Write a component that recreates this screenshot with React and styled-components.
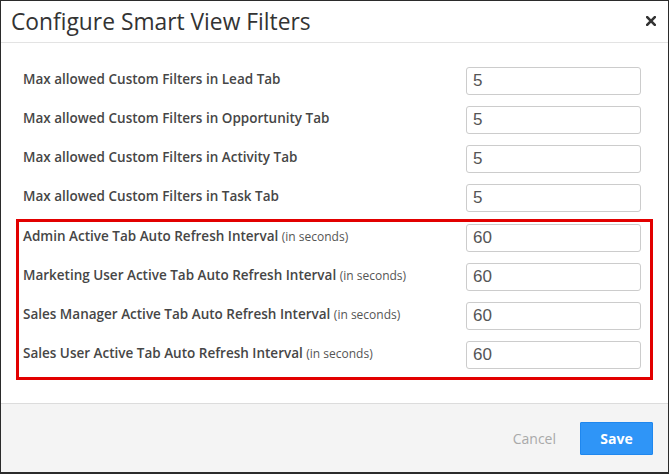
import React, { useState } from 'react';
import styled, { createGlobalStyle } from 'styled-components';

const GlobalStyle = createGlobalStyle`
  html, body {
    margin: 0;
    padding: 0;
    background: #ffffff;
  }
  * {
    box-sizing: border-box;
  }
`;

const Modal = styled.div`
  width: 669px;
  height: 474px;
  display: flex;
  flex-direction: column;
  border: 1px solid #2b2b2b;
  border-bottom-width: 2px;
  background: #fff;
  font-family: "Open Sans", "Noto Sans", sans-serif;
  color: #333;
`;

const Header = styled.div`
  height: 42px;
  display: flex;
  align-items: center;
  justify-content: space-between;
  padding: 0 11px 0 10px;
  border-bottom: 1px solid #e3e3e3;
`;

const Title = styled.h1`
  margin: 0;
  font-size: 22.8px;
  font-weight: 400;
  color: #333;
`;

const CloseButton = styled.button`
  border: none;
  background: none;
  padding: 0;
  width: 12px;
  height: 12px;
  display: flex;
  align-items: center;
  justify-content: center;
  cursor: pointer;
  margin-top: -2px;
`;

const Body = styled.div`
  flex: 1;
  padding: 24px 15px 0;
  display: flex;
  flex-direction: column;
  gap: 11px;
`;

const Highlight = styled.div`
  border: 3px solid #e20000;
  padding: 2px 0 8px;
  margin-top: -4px;
  display: flex;
  flex-direction: column;
  gap: 11px;
`;

const Row = styled.div`
  display: grid;
  grid-template-columns: 1fr 175px;
  align-items: center;
  height: 28px;
  padding: ${(p) => (p.$boxed ? '0 9px 0 4px' : '0 12px 0 7px')};
`;

const Label = styled.label`
  font-size: 13.5px;
  font-weight: 600;
  color: #464646;
  margin-top: -5px;
`;

const Unit = styled.span`
  font-size: 12px;
  font-weight: 400;
  color: #555;
`;

const Input = styled.input`
  width: 175px;
  height: 28px;
  border: 1px solid #ccc;
  border-radius: 3px;
  padding: 0 6px;
  font-family: "Liberation Sans", Arial, sans-serif;
  font-size: 17px;
  color: #555;
  outline: none;

  &:focus {
    border-color: #66afe9;
  }
`;

const Footer = styled.div`
  height: 69px;
  border-top: 1px solid #dcdcdc;
  background: #f4f4f4;
  display: flex;
  align-items: center;
  justify-content: flex-end;
  padding: 0 15px 0 0;
  gap: 12px;
`;

const CancelButton = styled.button`
  border: none;
  background: none;
  font-family: inherit;
  font-size: 14px;
  color: #a9a9a9;
  padding: 0 12px;
  cursor: pointer;
`;

const SaveButton = styled.button`
  width: 73px;
  height: 33px;
  border: 1px solid #1f87ee;
  background: #2f95f7;
  color: #fff;
  font-family: inherit;
  font-size: 14px;
  font-weight: 700;
  border-radius: 1px;
  cursor: pointer;
`;

const limits = [
  { name: 'lead', label: 'Max allowed Custom Filters in Lead Tab', value: '5' },
  { name: 'opportunity', label: 'Max allowed Custom Filters in Opportunity Tab', value: '5' },
  { name: 'activity', label: 'Max allowed Custom Filters in Activity Tab', value: '5' },
  { name: 'task', label: 'Max allowed Custom Filters in Task Tab', value: '5' },
];

const intervals = [
  { name: 'admin', label: 'Admin Active Tab Auto Refresh Interval', value: '60' },
  { name: 'marketing', label: 'Marketing User Active Tab Auto Refresh Interval', value: '60' },
  { name: 'salesManager', label: 'Sales Manager Active Tab Auto Refresh Interval', value: '60' },
  { name: 'salesUser', label: 'Sales User Active Tab Auto Refresh Interval', value: '60' },
];

function App() {
  const [values, setValues] = useState(() => {
    const init = {};
    [...limits, ...intervals].forEach((f) => {
      init[f.name] = f.value;
    });
    return init;
  });

  const handleChange = (e) => {
    setValues({ ...values, [e.target.name]: e.target.value });
  };

  return (
    <>
      <GlobalStyle />
      <Modal>
        <Header>
          <Title>Configure Smart View Filters</Title>
          <CloseButton aria-label="Close">
            <svg width="10" height="10" viewBox="0 0 10 10">
              <path d="M1.2 1.2 L8.8 8.8 M8.8 1.2 L1.2 8.8" stroke="#333" strokeWidth="2.6" strokeLinecap="square" />
            </svg>
          </CloseButton>
        </Header>
        <Body>
          {limits.map((f) => (
            <Row key={f.name}>
              <Label htmlFor={f.name}>{f.label}</Label>
              <Input id={f.name} name={f.name} value={values[f.name]} onChange={handleChange} />
            </Row>
          ))}
          <Highlight>
            {intervals.map((f) => (
              <Row key={f.name} $boxed>
                <Label htmlFor={f.name}>
                  {f.label} <Unit>(in seconds)</Unit>
                </Label>
                <Input id={f.name} name={f.name} value={values[f.name]} onChange={handleChange} />
              </Row>
            ))}
          </Highlight>
        </Body>
        <Footer>
          <CancelButton>Cancel</CancelButton>
          <SaveButton>Save</SaveButton>
        </Footer>
      </Modal>
    </>
  );
}

export default App;
